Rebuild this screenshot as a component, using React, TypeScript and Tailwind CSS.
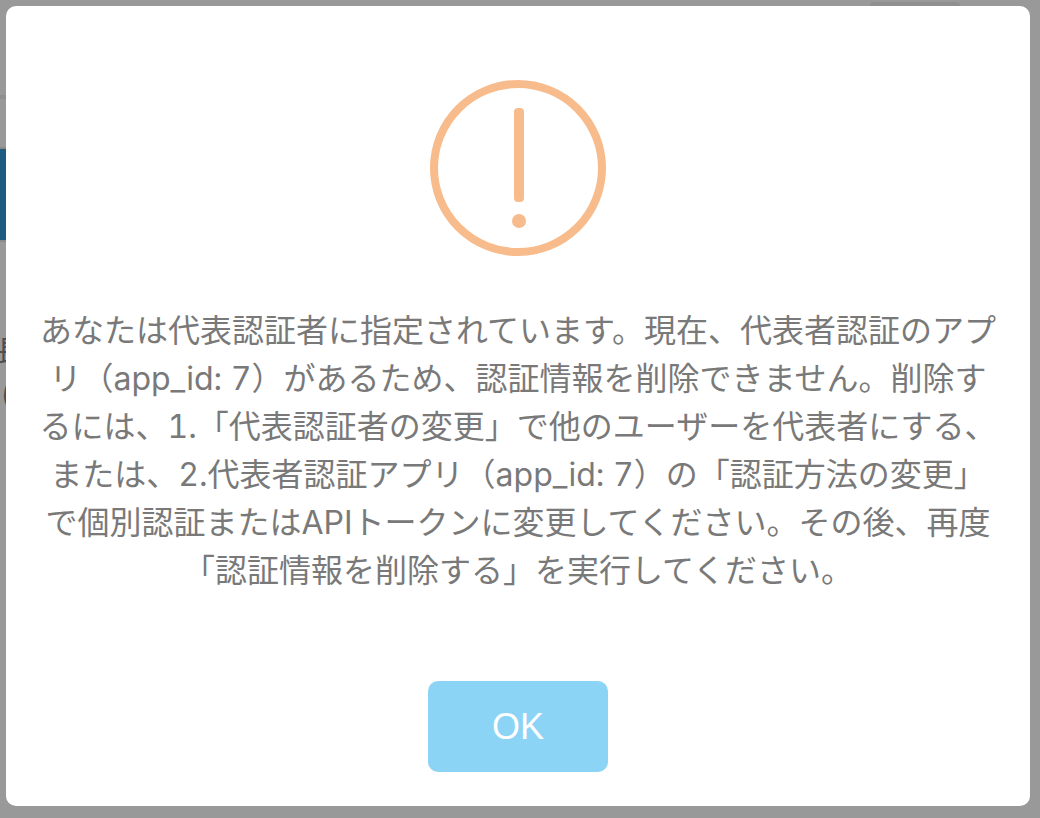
const lines = [
  'あなたは代表認証者に指定されています。現在、代表者認証のアプ',
  'リ（app_id: 7）があるため、認証情報を削除できません。削除す',
  'るには、1.「代表認証者の変更」で他のユーザーを代表者にする、',
  'または、2.代表者認証アプリ（app_id: 7）の「認証方法の変更」',
  'で個別認証またはAPIトークンに変更してください。その後、再度',
  '「認証情報を削除する」を実行してください。',
];

const WarningIcon = () => (
  <svg viewBox="0 0 176 176" className="size-44" fill="none" aria-hidden="true">
    <circle cx="88" cy="88" r="84" stroke="#f8bb8b" strokeWidth="8" />
    <rect x="84" y="28" width="10" height="94" rx="4" fill="#f8bb8b" />
    <circle cx="89" cy="141" r="7" fill="#f8bb8b" />
  </svg>
);

const PageBehind = () => (
  <div
    aria-hidden="true"
    className="col-start-1 row-start-1 flex items-start justify-between overflow-hidden bg-[#999999] pr-20"
  >
    <div className="w-1/2 pt-[95px] text-[28px] leading-[43px] text-[#4d4d4d]">
      <div className="h-[54px] border-t-4 border-b-2 border-t-[#909090] border-b-[#8a8a8a]" />
      <div className="h-[91px] bg-[#1f5b80]" />
      <div className="h-0.5 bg-[#8a8a8a]" />
      <div className="-ml-1 pt-[88px]">長</div>
      <div className="pl-px">(</div>
    </div>
    <div className="mt-0.5 h-4 w-[90px] rounded-t bg-[#8f8f8f]" />
  </div>
);

const App = () => {
  return (
    <div className="grid min-h-screen font-['Inter','Noto_Sans_CJK_JP',sans-serif]">
      <PageBehind />

      <div className="z-10 col-start-1 row-start-1 pt-1.5 pr-2.5 pb-3 pl-1.5">
        <div
          role="alertdialog"
          aria-modal="true"
          aria-describedby="alert-message"
          className="flex flex-col items-center rounded-[10px] bg-white px-8 pt-[74px] pb-[34px]"
        >
          <WarningIcon />

          <p
            id="alert-message"
            className="mt-[51px] text-center text-[32px] leading-[48px] text-[#797979] tabular-nums"
          >
            {lines.map((line) => (
              <span key={line} className="block whitespace-nowrap">
                {line}
              </span>
            ))}
          </p>

          <button
            type="button"
            className="mt-[86px] h-[91px] w-[180px] rounded-[10px] bg-[#8cd4f5] font-['Liberation_Sans',sans-serif] text-[36px] text-white"
          >
            OK
          </button>
        </div>
      </div>
    </div>
  );
};

export default App;
